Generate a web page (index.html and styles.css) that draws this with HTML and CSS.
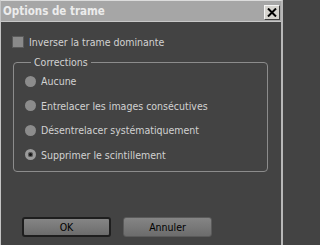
FILE: index.html
```html
<!DOCTYPE html>
<html>
<head>
<meta charset="utf-8">
<link rel="stylesheet" href="styles.css">
</head>
<body>
<div class="window">
  <div class="titlebar">
    <span class="title">Options de trame</span>
    <span class="close"><svg width="10" height="9" viewBox="0 0 10 9"><path d="M1 0.5 L9 8.5 M9 0.5 L1 8.5" stroke="#000" stroke-width="2"/></svg></span>
  </div>
  <div class="content">
    <label class="row check"><span class="box"></span><span>Inverser la trame dominante</span></label>
    <fieldset class="group">
      <legend>Corrections</legend>
      <div class="row radio"><span class="dot"></span><span>Aucune</span></div>
      <div class="row radio"><span class="dot"></span><span>Entrelacer les images consécutives</span></div>
      <div class="row radio"><span class="dot"></span><span>Désentrelacer systématiquement</span></div>
      <div class="row radio"><span class="dot on"></span><span>Supprimer le scintillement</span></div>
    </fieldset>
    <div class="buttons">
      <button class="btn default">OK</button>
      <button class="btn">Annuler</button>
    </div>
  </div>
</div>
</body>
</html>
```
FILE: styles.css
```css
html, body {
  margin: 0;
  padding: 0;
  background: #434343;
}
.window {
  width: 283px;
  height: 245px;
  box-sizing: border-box;
  border-top: 1px solid #dcdcdc;
  border-left: 1px solid #c4c4c4;
  border-right: 2px solid #b8b8b8;
  background: #434343;
  display: flex;
  flex-direction: column;
  font-family: "DejaVu Sans Condensed", "DejaVu Sans", sans-serif;
  font-size: 10.5px;
  color: #d2d2d2;
}
.titlebar {
  height: 20px;
  background: #a6a6a6;
  border-bottom: 1px solid #c8c8c8;
  display: flex;
  align-items: center;
  justify-content: space-between;
  padding: 0 1px 0 2px;
}
.title {
  font-weight: bold;
  font-size: 11.5px;
  color: #ececec;
}
.close {
  width: 14px;
  height: 13px;
  background: #d6d4cf;
  border: 1px solid;
  border-color: #f4f4f4 #404040 #404040 #f4f4f4;
  display: flex;
  align-items: center;
  justify-content: center;
  margin-top: 2px;
}
.content {
  flex: 1;
  display: flex;
  flex-direction: column;
  padding: 0 13px 0 11px;
}
.row {
  display: flex;
  align-items: center;
  gap: 5px;
}
.check {
  margin-top: 13px;
  height: 14px;
}
.box {
  width: 10px;
  height: 10px;
  background: #8a8a8a;
  border: 1px solid #5a5a5a;
}
.group {
  margin: 7px 0 0 1px;
  padding: 6px 0 9px 11px;
  border: 1px solid #8c8c8c;
  border-radius: 4px;
  display: flex;
  flex-direction: column;
  gap: 10.5px;
  min-width: 0;
}
.group legend {
  padding: 0 3px;
  margin-left: 6px;
  color: #d2d2d2;
  font-size: 10.5px;
}
.radio {
  height: 14px;
}
.dot {
  width: 11px;
  height: 11px;
  border-radius: 50%;
  background: #8c8c8c;
  box-sizing: border-box;
  flex: none;
}
.dot.on {
  background: #111;
  border: 3px solid #9a9a9a;
  box-shadow: 0 0 0 1px #5a5a5a inset;
}
.buttons {
  margin-top: auto;
  margin-bottom: 8px;
  display: flex;
  gap: 12px;
  padding-left: 10px;
}
.btn {
  width: 89px;
  height: 20px;
  font-family: "DejaVu Sans Condensed", "DejaVu Sans", sans-serif;
  font-size: 10.5px;
  color: #000;
  background: linear-gradient(#858585, #6c6c6c);
  border: 1px solid #5a5a5a;
  border-radius: 3px;
  padding: 0;
}
.btn.default {
  border: 2px solid #1e1e1e;
}
```
